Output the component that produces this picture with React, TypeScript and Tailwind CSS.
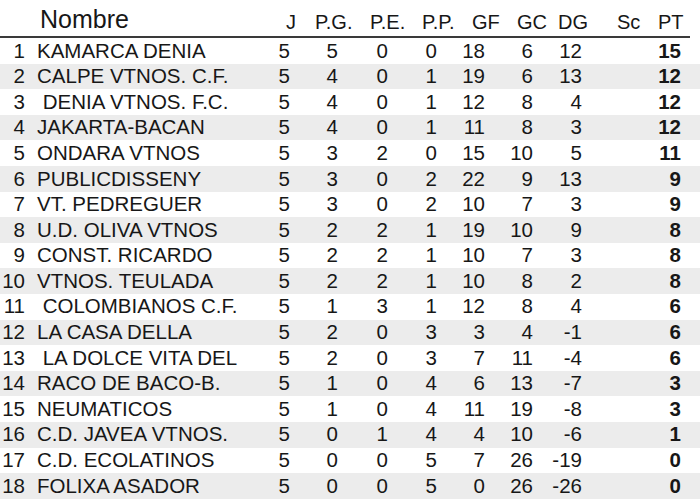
import React from "react";

type Row = [number, string, number, number, number, number, number, number, number, number];

const rows: Row[] = [
  [1, "KAMARCA DENIA", 5, 5, 0, 0, 18, 6, 12, 15],
  [2, "CALPE VTNOS. C.F.", 5, 4, 0, 1, 19, 6, 13, 12],
  [3, " DENIA VTNOS. F.C.", 5, 4, 0, 1, 12, 8, 4, 12],
  [4, "JAKARTA-BACAN", 5, 4, 0, 1, 11, 8, 3, 12],
  [5, "ONDARA VTNOS", 5, 3, 2, 0, 15, 10, 5, 11],
  [6, "PUBLICDISSENY", 5, 3, 0, 2, 22, 9, 13, 9],
  [7, "VT. PEDREGUER", 5, 3, 0, 2, 10, 7, 3, 9],
  [8, "U.D. OLIVA VTNOS", 5, 2, 2, 1, 19, 10, 9, 8],
  [9, "CONST. RICARDO", 5, 2, 2, 1, 10, 7, 3, 8],
  [10, "VTNOS. TEULADA", 5, 2, 2, 1, 10, 8, 2, 8],
  [11, " COLOMBIANOS C.F.", 5, 1, 3, 1, 12, 8, 4, 6],
  [12, "LA CASA DELLA", 5, 2, 0, 3, 3, 4, -1, 6],
  [13, " LA DOLCE VITA DEL", 5, 2, 0, 3, 7, 11, -4, 6],
  [14, "RACO DE BACO-B.", 5, 1, 0, 4, 6, 13, -7, 3],
  [15, "NEUMATICOS", 5, 1, 0, 4, 11, 19, -8, 3],
  [16, "C.D. JAVEA VTNOS.", 5, 0, 1, 4, 4, 10, -6, 1],
  [17, "C.D. ECOLATINOS", 5, 0, 0, 5, 7, 26, -19, 0],
  [18, "FOLIXA ASADOR", 5, 0, 0, 5, 0, 26, -26, 0],
];

const headers = ["J", "P.G.", "P.E.", "P.P.", "GF", "GC", "DG", "Sc", "PT"];

export default function App() {
  return (
    <div
      className="w-[700px] h-[499px] overflow-hidden bg-white text-[#171717]"
      style={{ fontFamily: '"Liberation Sans", Arial, sans-serif' }}
    >
      {/* header */}
      <div className="grid h-[36px] grid-cols-[286px_29px_55px_52px_50px_45px_41px_59px_41px_1fr] items-end pb-[4px] text-[20px] leading-none">
        <div className="pl-[40px] text-[25px]">Nombre</div>
        {headers.map((h) => (
          <div key={h}>{h}</div>
        ))}
      </div>
      <div className="mr-[10px] h-[2px] bg-[#3a3a3a]" />

      {rows.map((r, i) => (
        <div
          key={r[0]}
          className={`grid h-[25.6px] grid-cols-[25px_215px_50px_48px_50px_49px_48px_48px_49px_99px] items-center text-[20.5px] leading-none ${
            i % 2 === 1 ? "bg-[#ececec]" : "bg-white"
          }`}
        >
          <div className="text-right">{r[0]}</div>
          <div className="whitespace-pre pl-[12px]">{r[1]}</div>
          <div className="text-right">{r[2]}</div>
          <div className="text-right">{r[3]}</div>
          <div className="text-right">{r[4]}</div>
          <div className="text-right">{r[5]}</div>
          <div className="text-right">{r[6]}</div>
          <div className="text-right">{r[7]}</div>
          <div className="text-right">{r[8]}</div>
          <div className="text-right font-bold">{r[9]}</div>
        </div>
      ))}
    </div>
  );
}
